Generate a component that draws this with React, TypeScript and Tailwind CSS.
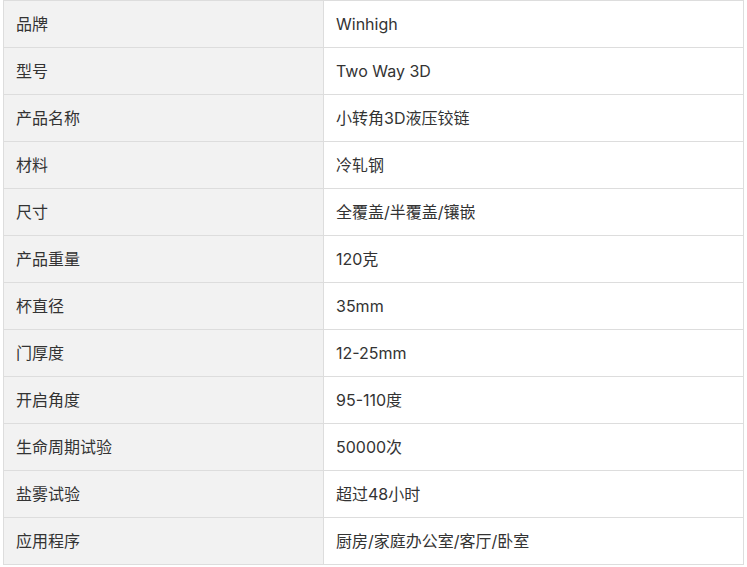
import React from "react";

const rows: [string, string][] = [
  ["品牌", "Winhigh"],
  ["型号", "Two Way 3D"],
  ["产品名称", "小转角3D液压铰链"],
  ["材料", "冷轧钢"],
  ["尺寸", "全覆盖/半覆盖/镶嵌"],
  ["产品重量", "120克"],
  ["杯直径", "35mm"],
  ["门厚度", "12-25mm"],
  ["开启角度", "95-110度"],
  ["生命周期试验", "50000次"],
  ["盐雾试验", "超过48小时"],
  ["应用程序", "厨房/家庭办公室/客厅/卧室"],
];

export default function App() {
  return (
    <div className="w-[747px] h-[567px] bg-white pl-[3px]" style={{ fontFamily: 'Inter, "Noto Sans CJK SC", sans-serif' }}>
      <table className="w-[741px] border-collapse text-[16px] leading-[24px] text-[#333333]">
        <tbody>
          {rows.map(([k, v]) => (
            <tr key={k} className="h-[47px]">
              <td className="w-[320px] border border-[#dddddd] bg-[#f2f2f2] pl-3 align-middle">{k}</td>
              <td className="border border-[#dddddd] bg-white pl-3 align-middle">{v}</td>
            </tr>
          ))}
        </tbody>
      </table>
    </div>
  );
}
